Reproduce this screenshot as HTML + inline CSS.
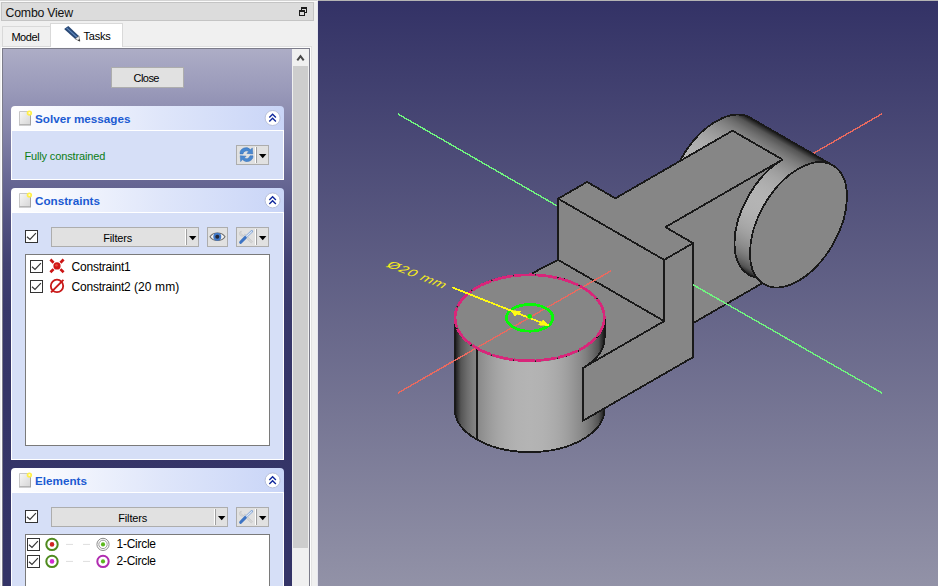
<!DOCTYPE html>
<html>
<head>
<meta charset="utf-8">
<title>FreeCAD</title>
<style>
*{box-sizing:border-box;margin:0;padding:0}
html,body{width:938px;height:586px;overflow:hidden;background:#f0f0f0}
body{position:relative;font-family:"Liberation Sans",sans-serif;font-size:12px;color:#000}
.a{position:absolute}
.t{position:absolute;white-space:nowrap;line-height:14px;height:14px}
#view{left:318px;top:0;width:620px;height:586px}
#titlebar{left:1px;top:2px;width:313px;height:19px;background:#dcdcdc;border:1px solid #c4c4c4}
.tab{border:1px solid #d9d9d9;border-bottom:none}
#pane{left:2px;top:48px;width:308px;height:540px;border:1px solid #7c7c8a;background:linear-gradient(to bottom,#adadc6 0px,#9a9aba 40px,#8585aa 80px,#6b6b97 125px,#535382 170px,#414172 215px,#39396b 260px,#353568 330px,#343467 540px)}
.hdr{left:11px;width:273px;height:25px;border-radius:4px 4px 0 0;background:linear-gradient(to right,#ffffff 0%,#f1f4fd 25%,#dfe6fa 55%,#c9d5f7 100%);border-bottom:1px solid #ffffff}
.bdy{left:11px;width:273px;background:#d6dff7;border:1px solid #ffffff;border-top:none}
.ttl{font-weight:bold;color:#1c5bd2;font-size:11.7px}
.w{font-size:11px}
.btn{background:#e1e1e1;border:1px solid #adadad}
.cb{width:13px;height:13px;background:#fff;border:1px solid #333}
.list{background:#fff;border:1px solid #7a7a7a}
.sep{width:1px;background:#a0a0a0}
.sepw{width:1px;background:#ffffff}
</style>
</head>
<body>
<!-- ======== dock title ======== -->
<div class="a" style="left:0;top:0;width:318px;height:1px;background:#d4d4d4"></div><div class="a" style="left:0;top:1px;width:318px;height:1px;background:#fafafa"></div>
<div class="a" id="titlebar"></div>
<div class="t m" style="left:5.6px;top:5.5px;font-size:12.3px;letter-spacing:-0.22px;color:#111">Combo View</div>
<svg class="a" style="left:298px;top:6px" width="11" height="11" viewBox="0 0 11 11" shape-rendering="crispEdges">
 <rect x="3.5" y="1.5" width="5" height="5" fill="#dcdcdc" stroke="#1c1c1c" stroke-width="1"/><rect x="3" y="1" width="6" height="2" fill="#1c1c1c"/>
 <rect x="1.5" y="4.5" width="5" height="5" fill="#dcdcdc" stroke="#1c1c1c" stroke-width="1"/><rect x="1" y="4" width="6" height="2" fill="#1c1c1c"/>
</svg>

<!-- ======== tabs ======== -->
<div class="a tab" style="left:2px;top:26px;width:49px;height:21px;background:#f0f0f0"></div>
<div class="t m w" style="left:11.4px;top:29.8px;letter-spacing:-0.44px">Model</div>
<div class="a tab" style="left:50px;top:23px;width:73px;height:25px;background:#fff"></div>
<svg class="a" style="left:63px;top:25px" width="18" height="18" viewBox="0 0 18 18">
 <path d="M1.1 4.0 L5.3 1.0 L15.9 10.9 L12.2 13.9 Z" fill="#294875"/>
 <path d="M3.6 2.9 L13.9 12.2" stroke="#5e86bb" stroke-width="1.2"/>
 <path d="M15.9 10.9 L16.8 16.2 L12.2 13.9 Z" fill="#f6f6f6" stroke="#4a4a4a" stroke-width="0.6"/>
 <path d="M16.9 16.3 L16.4 14.0 L14.7 15.2 Z" fill="#1c1c1c"/>
</svg>
<div class="t m w" style="left:83.6px;top:28.8px;letter-spacing:-0.24px">Tasks</div>

<!-- ======== task pane ======== -->
<div class="a" id="pane"></div>
<!-- scrollbar -->
<div class="a" style="left:292px;top:49px;width:17px;height:537px;background:#f0f0f0"></div>
<div class="a" style="left:293px;top:66px;width:15px;height:482px;background:#cdcdcd"></div>
<svg class="a" style="left:292px;top:49px" width="17" height="17" viewBox="0 0 17 17"><path d="M5.3 11.3 L8.5 7.2 L11.7 11.3" fill="none" stroke="#484848" stroke-width="2"/></svg>
<div class="a" style="left:310px;top:47px;width:1px;height:539px;background:#fdfdfd"></div><div class="a" style="left:311px;top:46px;width:1px;height:540px;background:#e3e3e3"></div><div class="a" style="left:1px;top:47px;width:1px;height:539px;background:#fdfdfd"></div><div class="a" style="left:1px;top:47px;width:310px;height:1px;background:#fdfdfd"></div><div class="a" style="left:123px;top:46px;width:189px;height:1px;background:#e0e0e0"></div><div class="a" style="left:2px;top:46px;width:48px;height:1px;background:#dadada"></div>

<!-- Close button -->
<div class="a btn" style="left:111px;top:67px;width:73px;height:21px"></div>
<div class="t m w" style="left:133.6px;top:70.8px;letter-spacing:-0.56px">Close</div>

<!-- ======== Solver messages ======== -->
<div class="a hdr" style="top:106px"></div>
<div class="a bdy" style="top:131px;height:49px"></div>
<svg class="a ico" style="left:18px;top:110px" width="15" height="16" viewBox="0 0 15 16">
 <defs><linearGradient id="pg" x1="0" y1="0" x2="1" y2="1"><stop offset="0" stop-color="#f7f7f7"/><stop offset="1" stop-color="#d6d6d6"/></linearGradient></defs>
 <path d="M1.5 1.5 H12.5 V14.5 H1.5 Z" fill="url(#pg)" stroke="#c6c6c6" stroke-width="1"/>
 <path d="M1 15 H13 M12.5 3 V15" stroke="#a2a2a2" stroke-width="1"/>
 <circle cx="11.4" cy="3.1" r="2.7" fill="#ffef4a"/><circle cx="11.4" cy="3.1" r="1" fill="#fffbd0"/>
</svg>
<div class="t m ttl" style="left:35px;top:111.5px">Solver messages</div>
<svg class="a" style="left:264px;top:110px" width="17" height="17" viewBox="0 0 17 17">
 <circle cx="8.6" cy="8" r="7.5" fill="#fff" stroke="#b9c1da" stroke-width="1"/>
 <path d="M5.3 7.6 L8.6 4.3 L11.9 7.6 M5.3 11.6 L8.6 8.3 L11.9 11.6" fill="none" stroke="#10289c" stroke-width="1.35"/>
</svg>
<div class="t m w" style="left:24.4px;top:149px;color:#0b7c14;letter-spacing:-0.14px">Fully constrained</div>
<div class="a btn" style="left:236px;top:145px;width:33px;height:20px"></div>
<div class="a sep" style="left:256px;top:147px;height:16px"></div>
<div class="a sepw" style="left:255px;top:147px;height:16px"></div>
<svg class="a" style="left:259px;top:154px" width="8" height="5" viewBox="0 0 8 5"><path d="M0 0 H7.4 L3.7 4.2 Z" fill="#000"/></svg>
<svg class="a" style="left:238px;top:147px" width="17" height="16" viewBox="0 0 17 16">
 <path d="M2 6.9 A6 5.9 0 0 1 12.6 2.8 L14.3 0.9 L14.8 6.9 L8.9 6.4 L10.7 4.5 A3.6 3.4 0 0 0 5 6.9 Z" fill="#4a88cf" stroke="#356fb8" stroke-width="0.5"/>
 <path d="M15 8.8 A6 5.6 0 0 1 4.4 12.6 L2.7 14.6 L2.2 8.7 L8.1 9.2 L6.3 11 A3.6 3.4 0 0 0 12 8.8 Z" fill="#4a88cf" stroke="#356fb8" stroke-width="0.5"/>
</svg>

<!-- ======== Constraints ======== -->
<div class="a hdr" style="top:188px"></div>
<div class="a bdy" style="top:213px;height:247px"></div>
<svg class="a ico" style="left:18px;top:192px" width="15" height="16" viewBox="0 0 15 16">
 <defs><linearGradient id="pg" x1="0" y1="0" x2="1" y2="1"><stop offset="0" stop-color="#f7f7f7"/><stop offset="1" stop-color="#d6d6d6"/></linearGradient></defs>
 <path d="M1.5 1.5 H12.5 V14.5 H1.5 Z" fill="url(#pg)" stroke="#c6c6c6" stroke-width="1"/>
 <path d="M1 15 H13 M12.5 3 V15" stroke="#a2a2a2" stroke-width="1"/>
 <circle cx="11.4" cy="3.1" r="2.7" fill="#ffef4a"/><circle cx="11.4" cy="3.1" r="1" fill="#fffbd0"/>
</svg>
<div class="t m ttl" style="left:35px;top:193.6px">Constraints</div>
<svg class="a" style="left:264px;top:192px" width="17" height="17" viewBox="0 0 17 17">
 <circle cx="8.6" cy="8.4" r="7.5" fill="#fff" stroke="#b9c1da" stroke-width="1"/>
 <path d="M5.3 8 L8.6 4.7 L11.9 8 M5.3 12 L8.6 8.7 L11.9 12" fill="none" stroke="#10289c" stroke-width="1.35"/>
</svg>
<!-- filter row -->
<div class="a cb" style="left:25px;top:230px"></div>
<svg class="a" style="left:25px;top:230px" width="13" height="13" viewBox="0 0 13 13"><path d="M2 6.8 L5 9.5 L10.9 3.1" fill="none" stroke="#333" stroke-width="1.15"/></svg>
<div class="a btn" style="left:51px;top:227px;width:148px;height:20px"></div>
<div class="t m w" style="left:103.2px;top:231px;letter-spacing:-0.13px">Filters</div>
<div class="a sep" style="left:186px;top:229px;height:16px"></div>
<div class="a sepw" style="left:185px;top:229px;height:16px"></div>
<svg class="a" style="left:189px;top:236px" width="8" height="5" viewBox="0 0 8 5"><path d="M0 0 H7.4 L3.7 4.2 Z" fill="#000"/></svg>
<div class="a btn" style="left:207px;top:227px;width:21px;height:20px"></div>
<svg class="a" style="left:209px;top:230px" width="17" height="14" viewBox="0 0 17 14">
 <path d="M1 6.8 C4.2 1.8 12.8 1.8 16 6.8 C12.8 11.8 4.2 11.8 1 6.8 Z" fill="#f4f4f4" stroke="#6c6c6c" stroke-width="1.1"/>
 <circle cx="8.3" cy="6.7" r="4" fill="#4279c8"/>
 <circle cx="8.3" cy="6.7" r="2" fill="#23283a"/>
</svg>
<div class="a btn" style="left:236px;top:227px;width:33px;height:20px"></div>
<div class="a sep" style="left:256px;top:229px;height:16px"></div>
<div class="a sepw" style="left:255px;top:229px;height:16px"></div>
<svg class="a" style="left:259px;top:236px" width="8" height="5" viewBox="0 0 8 5"><path d="M0 0 H7.4 L3.7 4.2 Z" fill="#000"/></svg>
<svg class="a" style="left:238px;top:229px" width="17" height="16" viewBox="0 0 17 16">
 <path d="M3.4 2.0 A2.7 2.7 0 1 0 6.8 4.9 L14.6 12.6 L13.2 14 L5.2 6.2 A2.7 2.7 0 0 1 3.4 2.0 Z" fill="#d6d6d6" stroke="#c4c4c4" stroke-width="0.6"/>
 <path d="M7.4 8.4 L13.8 2.4" stroke="#7fa3d6" stroke-width="2.6" stroke-linecap="round"/>
 <path d="M7.8 8.0 L13.6 2.6" stroke="#dfe8f4" stroke-width="1.2" stroke-linecap="round"/>
 <path d="M2.7 13.3 L7.2 8.6" stroke="#3d74c4" stroke-width="3" stroke-linecap="round"/>
</svg>
<!-- list -->
<div class="a list" style="left:25px;top:254px;width:245px;height:192px"></div>
<div class="a cb" style="left:30px;top:260px"></div>
<svg class="a" style="left:30px;top:260px" width="13" height="13" viewBox="0 0 13 13"><path d="M2 6.8 L5 9.5 L10.9 3.1" fill="none" stroke="#333" stroke-width="1.15"/></svg>
<svg class="a" style="left:49px;top:258px" width="16" height="16" viewBox="0 0 16 16">
 <path d="M1.4 1.5 L4.6 4.7 M14.6 1.5 L11.4 4.7 M1.4 14.3 L4.6 11.1 M14.6 14.3 L11.4 11.1" stroke="#cc1414" stroke-width="2.7"/>
 <circle cx="8" cy="7.9" r="3.6" fill="#d01616"/>
 <circle cx="7.5" cy="7.3" r="1.3" fill="#e64a3c"/>
</svg>
<div class="t m" style="left:71.6px;top:260.3px;letter-spacing:-0.23px">Constraint1</div>
<div class="a cb" style="left:30px;top:280px"></div>
<svg class="a" style="left:30px;top:280px" width="13" height="13" viewBox="0 0 13 13"><path d="M2 6.8 L5 9.5 L10.9 3.1" fill="none" stroke="#333" stroke-width="1.15"/></svg>
<svg class="a" style="left:49px;top:278px" width="16" height="16" viewBox="0 0 16 16">
 <circle cx="8" cy="7.9" r="6.2" fill="none" stroke="#c81818" stroke-width="1.8"/>
 <path d="M2 14.3 L14.4 1.9" stroke="#c81818" stroke-width="1.9"/>
</svg>
<div class="t m" style="left:71.6px;top:280.4px;letter-spacing:-0.23px">Constraint2<span style="letter-spacing:0.12px"> (20 mm)</span></div>

<!-- ======== Elements ======== -->
<div class="a hdr" style="top:468px"></div>
<div class="a bdy" style="top:493px;height:100px"></div>
<svg class="a ico" style="left:18px;top:472px" width="15" height="16" viewBox="0 0 15 16">
 <defs><linearGradient id="pg" x1="0" y1="0" x2="1" y2="1"><stop offset="0" stop-color="#f7f7f7"/><stop offset="1" stop-color="#d6d6d6"/></linearGradient></defs>
 <path d="M1.5 1.5 H12.5 V14.5 H1.5 Z" fill="url(#pg)" stroke="#c6c6c6" stroke-width="1"/>
 <path d="M1 15 H13 M12.5 3 V15" stroke="#a2a2a2" stroke-width="1"/>
 <circle cx="11.4" cy="3.1" r="2.7" fill="#ffef4a"/><circle cx="11.4" cy="3.1" r="1" fill="#fffbd0"/>
</svg>
<div class="t m ttl" style="left:35px;top:474.2px">Elements</div>
<svg class="a" style="left:264px;top:472px" width="17" height="17" viewBox="0 0 17 17">
 <circle cx="8.6" cy="8.4" r="7.5" fill="#fff" stroke="#b9c1da" stroke-width="1"/>
 <path d="M5.3 8 L8.6 4.7 L11.9 8 M5.3 12 L8.6 8.7 L11.9 12" fill="none" stroke="#10289c" stroke-width="1.35"/>
</svg>
<div class="a cb" style="left:25px;top:510px"></div>
<svg class="a" style="left:25px;top:510px" width="13" height="13" viewBox="0 0 13 13"><path d="M2 6.8 L5 9.5 L10.9 3.1" fill="none" stroke="#333" stroke-width="1.15"/></svg>
<div class="a btn" style="left:51px;top:507px;width:177px;height:20px"></div>
<div class="t m w" style="left:118.2px;top:511px;letter-spacing:-0.13px">Filters</div>
<div class="a sep" style="left:215px;top:509px;height:16px"></div>
<div class="a sepw" style="left:214px;top:509px;height:16px"></div>
<svg class="a" style="left:218px;top:516px" width="8" height="5" viewBox="0 0 8 5"><path d="M0 0 H7.4 L3.7 4.2 Z" fill="#000"/></svg>
<div class="a btn" style="left:236px;top:507px;width:33px;height:20px"></div>
<div class="a sep" style="left:256px;top:509px;height:16px"></div>
<div class="a sepw" style="left:255px;top:509px;height:16px"></div>
<svg class="a" style="left:259px;top:516px" width="8" height="5" viewBox="0 0 8 5"><path d="M0 0 H7.4 L3.7 4.2 Z" fill="#000"/></svg>
<svg class="a" style="left:238px;top:509px" width="17" height="16" viewBox="0 0 17 16">
 <path d="M3.4 2.0 A2.7 2.7 0 1 0 6.8 4.9 L14.6 12.6 L13.2 14 L5.2 6.2 A2.7 2.7 0 0 1 3.4 2.0 Z" fill="#d6d6d6" stroke="#c4c4c4" stroke-width="0.6"/>
 <path d="M7.4 8.4 L13.8 2.4" stroke="#7fa3d6" stroke-width="2.6" stroke-linecap="round"/>
 <path d="M7.8 8.0 L13.6 2.6" stroke="#dfe8f4" stroke-width="1.2" stroke-linecap="round"/>
 <path d="M2.7 13.3 L7.2 8.6" stroke="#3d74c4" stroke-width="3" stroke-linecap="round"/>
</svg>
<div class="a list" style="left:25px;top:534px;width:245px;height:60px"></div>
<!-- element rows -->
<div class="a cb" style="left:27px;top:538px"></div>
<svg class="a" style="left:27px;top:538px" width="13" height="13" viewBox="0 0 13 13"><path d="M2 6.8 L5 9.5 L10.9 3.1" fill="none" stroke="#333" stroke-width="1.15"/></svg>
<svg class="a" style="left:44px;top:536px" width="70" height="17" viewBox="0 0 70 17">
 <circle cx="8" cy="8.4" r="5.7" fill="#fff" stroke="#4f8a1e" stroke-width="2"/><circle cx="8" cy="8.4" r="2.3" fill="#d02222"/>
 <path d="M22 8.4 H29 M39 8.4 H46" stroke="#dedede" stroke-width="1"/>
 <circle cx="59" cy="8.4" r="6.1" fill="#fff" stroke="#8c8c8c" stroke-width="1"/><circle cx="59" cy="8.4" r="4.2" fill="#fff" stroke="#9c9c9c" stroke-width="1"/><circle cx="59" cy="8.4" r="2.1" fill="#5cb81e"/>
</svg>
<div class="t m" style="left:116.5px;top:537.2px;letter-spacing:-0.27px">1-Circle</div>
<div class="a cb" style="left:27px;top:555px"></div>
<svg class="a" style="left:27px;top:555px" width="13" height="13" viewBox="0 0 13 13"><path d="M2 6.8 L5 9.5 L10.9 3.1" fill="none" stroke="#333" stroke-width="1.15"/></svg>
<svg class="a" style="left:44px;top:553px" width="70" height="17" viewBox="0 0 70 17">
 <circle cx="8" cy="8.4" r="5.7" fill="#fff" stroke="#4f8a1e" stroke-width="2"/><circle cx="8" cy="8.4" r="2.3" fill="#d428d4"/>
 <path d="M22 8.4 H29 M39 8.4 H46" stroke="#dedede" stroke-width="1"/>
 <circle cx="59" cy="8.4" r="5.7" fill="#fff" stroke="#b02cb0" stroke-width="2"/><circle cx="59" cy="8.4" r="2.1" fill="#5cb81e"/>
</svg>
<div class="t m" style="left:116.5px;top:554.3px;letter-spacing:-0.27px">2-Circle</div>

<!-- ======== 3D view ======== -->
<div class="a" style="left:317px;top:0;width:1px;height:586px;background:#e6e6ee"></div>
<svg class="a" id="view" width="620" height="586" viewBox="318 0 620 586">
<defs>
<linearGradient id="bg" x1="0" y1="0" x2="0" y2="1"><stop offset="0" stop-color="#333266"/><stop offset="1" stop-color="#9292a7"/></linearGradient>
<linearGradient id="ga" gradientUnits="userSpaceOnUse" x1="454.71" y1="0" x2="604.62" y2="0"><stop offset="0.0000" stop-color="#161616"/><stop offset="0.0417" stop-color="#555555"/><stop offset="0.0833" stop-color="#6d6d6d"/><stop offset="0.1250" stop-color="#7f7f7f"/><stop offset="0.1667" stop-color="#8c8c8c"/><stop offset="0.2083" stop-color="#969696"/><stop offset="0.2500" stop-color="#9f9f9f"/><stop offset="0.2917" stop-color="#a6a6a6"/><stop offset="0.3333" stop-color="#ababab"/><stop offset="0.3750" stop-color="#afafaf"/><stop offset="0.4167" stop-color="#b2b2b2"/><stop offset="0.4583" stop-color="#b3b3b3"/><stop offset="0.5000" stop-color="#b4b4b4"/><stop offset="0.5417" stop-color="#b3b3b3"/><stop offset="0.5833" stop-color="#b2b2b2"/><stop offset="0.6250" stop-color="#afafaf"/><stop offset="0.6667" stop-color="#ababab"/><stop offset="0.7083" stop-color="#a6a6a6"/><stop offset="0.7500" stop-color="#9f9f9f"/><stop offset="0.7917" stop-color="#969696"/><stop offset="0.8333" stop-color="#8c8c8c"/><stop offset="0.8750" stop-color="#7f7f7f"/><stop offset="0.9167" stop-color="#6d6d6d"/><stop offset="0.9583" stop-color="#555555"/><stop offset="1.0000" stop-color="#161616"/></linearGradient>
<linearGradient id="gb" gradientUnits="userSpaceOnUse" x1="764.19" y1="284.20" x2="832.78" y2="165.40"><stop offset="0.0000" stop-color="#161616"/><stop offset="0.0417" stop-color="#555555"/><stop offset="0.0833" stop-color="#6d6d6d"/><stop offset="0.1250" stop-color="#7f7f7f"/><stop offset="0.1667" stop-color="#8c8c8c"/><stop offset="0.2083" stop-color="#969696"/><stop offset="0.2500" stop-color="#9f9f9f"/><stop offset="0.2917" stop-color="#a6a6a6"/><stop offset="0.3333" stop-color="#ababab"/><stop offset="0.3750" stop-color="#afafaf"/><stop offset="0.4167" stop-color="#b2b2b2"/><stop offset="0.4583" stop-color="#b3b3b3"/><stop offset="0.5000" stop-color="#b4b4b4"/><stop offset="0.5417" stop-color="#b3b3b3"/><stop offset="0.5833" stop-color="#b2b2b2"/><stop offset="0.6250" stop-color="#afafaf"/><stop offset="0.6667" stop-color="#ababab"/><stop offset="0.7083" stop-color="#a6a6a6"/><stop offset="0.7500" stop-color="#9f9f9f"/><stop offset="0.7917" stop-color="#969696"/><stop offset="0.8333" stop-color="#8c8c8c"/><stop offset="0.8750" stop-color="#7f7f7f"/><stop offset="0.9167" stop-color="#6d6d6d"/><stop offset="0.9583" stop-color="#555555"/><stop offset="1.0000" stop-color="#161616"/></linearGradient>
</defs>
<rect x="318" y="0" width="620" height="586" fill="url(#bg)"/>
<rect x="318" y="0" width="620" height="1" fill="#b4b4b4"/>
<path d="M398,393 L882.5,113.5" stroke="#e86a60" stroke-width="1.4" fill="none" shape-rendering="crispEdges"/>
<path d="M398,114 L590,224.8" stroke="#70f580" stroke-width="1.4" fill="none" shape-rendering="crispEdges"/>
<path d="M750.33,117.80 L832.78,165.40 A68.59 39.60 -60 0 1 764.19,284.20 L681.74,236.60 A68.59 39.60 -60 0 1 750.33,117.80 Z" fill="url(#gb)" stroke="#191919" stroke-width="1.80" stroke-linejoin="round" stroke-linecap="round" shape-rendering="crispEdges"/>
<path d="M665.37,227.15 L782.46,159.55 A68.59 39.60 -60 0 0 782.46,271.55 L665.37,339.15 Z" fill="#868686" stroke="#191919" stroke-width="1.80" stroke-linejoin="round" stroke-linecap="round" shape-rendering="crispEdges"/>
<path d="M558.16,198.65 L587.09,181.95 L615.40,198.30 L732.49,130.70 L782.46,159.55 L665.37,227.15 L693.09,243.15 L664.16,259.85 Z" fill="#868686" stroke="#191919" stroke-width="1.80" stroke-linejoin="round" stroke-linecap="round" shape-rendering="crispEdges"/>
<ellipse cx="798.48" cy="224.80" rx="68.59" ry="39.60" transform="rotate(-60 798.48 224.80)" fill="#868686" stroke="#191919" stroke-width="1.80" stroke-linejoin="round" stroke-linecap="round" shape-rendering="crispEdges"/>
<path d="M454.71,317.80 L454.71,408.80 A74.95 43.27 0 0 0 604.62,408.80 L604.62,317.80 A74.95 43.27 0 0 1 454.71,317.80 Z" fill="url(#ga)" stroke="#191919" stroke-width="1.80" stroke-linejoin="round" stroke-linecap="round" shape-rendering="crispEdges"/>
<path d="M476.67,348.40 L476.67,439.40" fill="none" stroke="#191919" stroke-width="1.80" stroke-linejoin="round" stroke-linecap="round" shape-rendering="crispEdges"/>
<path d="M558.16,259.90 L664.16,321.10 L582.67,368.15 A74.95 43.27 0 0 0 604.62,337.55 L604.62,317.80 A74.95 43.27 0 0 0 529.67,274.53 Z" fill="#868686" stroke="#191919" stroke-width="1.80" stroke-linejoin="round" stroke-linecap="round" shape-rendering="crispEdges"/>
<path d="M558.16,198.65 L664.16,259.85 L664.16,321.10 L558.16,259.90 Z" fill="#868686" stroke="#191919" stroke-width="1.80" stroke-linejoin="round" stroke-linecap="round" shape-rendering="crispEdges"/>
<path d="M582.67,368.15 L664.16,321.10 L664.16,259.85 L693.09,243.15 L693.09,357.15 L582.67,420.90 Z" fill="#868686" stroke="#191919" stroke-width="1.80" stroke-linejoin="round" stroke-linecap="round" shape-rendering="crispEdges"/>
<path d="M664.16,321.10 L664.16,259.85" fill="none" stroke="#191919" stroke-width="1.80" stroke-linejoin="round" stroke-linecap="round" shape-rendering="crispEdges"/>
<ellipse cx="529.67" cy="317.80" rx="74.95" ry="43.27" fill="#868686" stroke="#191919" stroke-width="1.2"/>
<path d="M398,393 L611.16,270.75" stroke="#e86a60" stroke-width="1.4" fill="none" shape-rendering="crispEdges"/>
<path d="M693.00,284.70 L882,393" stroke="#70f580" stroke-width="1.4" fill="none" shape-rendering="crispEdges"/>
<ellipse cx="529.67" cy="317.80" rx="74.65" ry="42.97" fill="none" stroke="#d8267a" stroke-width="2.7" stroke-dasharray="21 1.2" shape-rendering="crispEdges"/>
<ellipse cx="529.67" cy="317.80" rx="23.15" ry="13.36" fill="none" stroke="#08f808" stroke-width="2.8" shape-rendering="crispEdges"/>
<g stroke="#fffa14" fill="#fffa14" stroke-width="1.8" shape-rendering="crispEdges">
<path d="M452,287.3 L548.6,325.5" fill="none"/>
<path d="M549.4,326.0 L538.6,324.8 L543.2,319.8 Z" stroke-width="0.6"/>
<path d="M511.2,310.8 L521.2,311.2 L514.9,316.2 Z" stroke-width="0.6"/>
</g>
<circle cx="529.67" cy="316.40" r="2.4" fill="#08f808"/>
<text transform="matrix(0.829 0.323 -0.559 0.478 385.3 266.3)" font-family="Liberation Sans, sans-serif" font-size="17" fill="#f6ec1c" letter-spacing="0.8">Ø20 mm</text>
</svg>
</body>
</html>
